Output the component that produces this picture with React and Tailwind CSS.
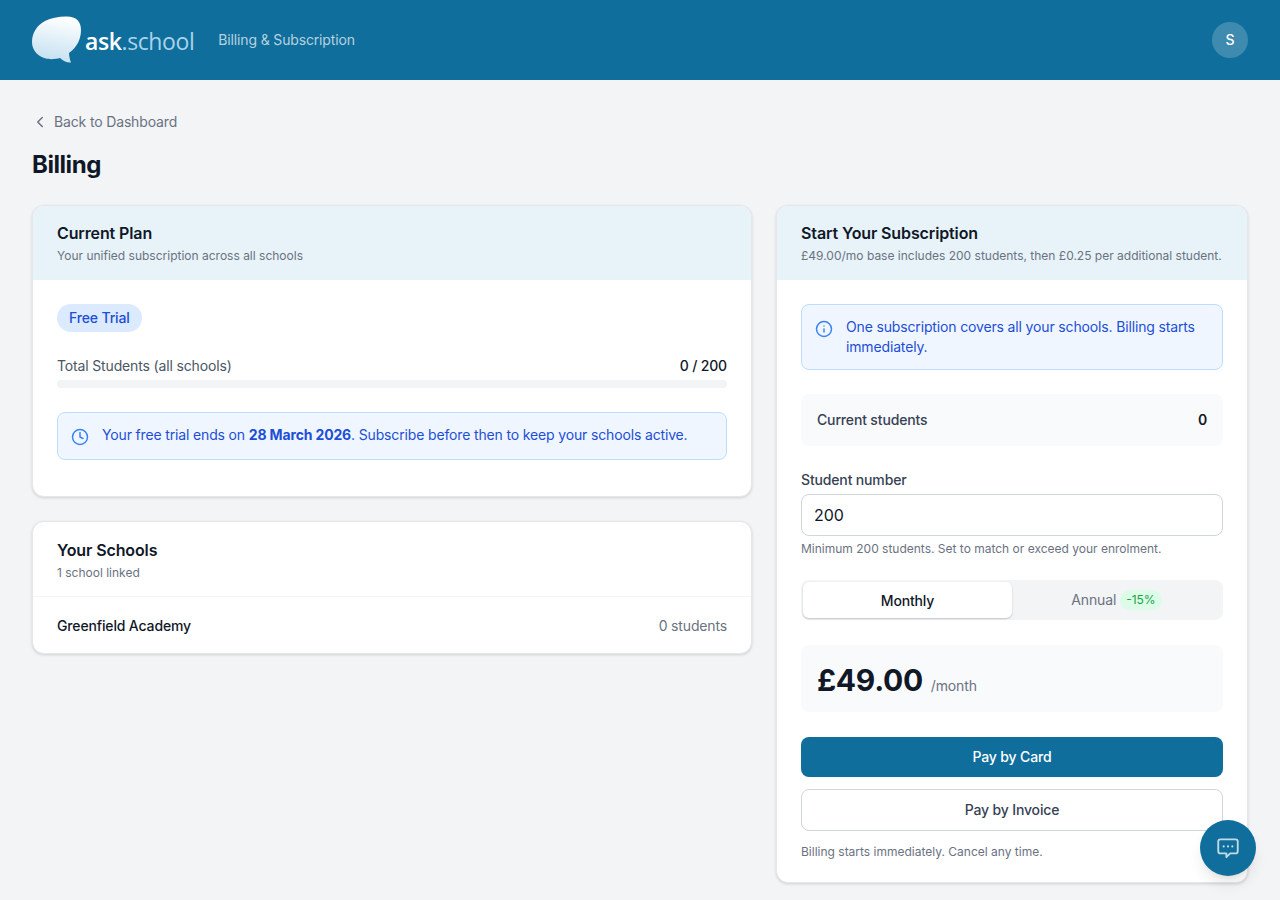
import React from 'react'
import { ChevronLeft, Clock, Info } from 'lucide-react'

function Logo() {
    return (
        <div className="flex items-center">
            <svg width="50" height="48" viewBox="0 0 50 48" className="shrink-0">
                <defs>
                    <linearGradient id="bubble" x1="0.6" y1="0" x2="0.4" y2="1">
                        <stop offset="0" stopColor="#ffffff" />
                        <stop offset="1" stopColor="#c4e0f0" />
                    </linearGradient>
                </defs>
                <path
                    d="M34 0.5C44 0.2 49 5 49 14C49 23 45 31 37 37C37 40 38 44 39 46.5C35 47 31 45 28 42C24 43 18 44 12 42C4 39 0 33 0 26C0 17 5 9 13 5C19 2 26 0.7 34 0.5Z"
                    fill="url(#bubble)"
                />
            </svg>
            <span className="font-['Open_Sans',sans-serif] text-[23px] leading-none tracking-[-0.4px] ml-[3px] mt-[3px] text-[#a9d3ea]">
                <span className="font-semibold text-white">ask</span>.school
            </span>
        </div>
    )
}

function CardHeader({ title, subtitle }) {
    return (
        <div className="bg-[#e7f3f8] px-6 pt-[15px] pb-4">
            <h2 className="text-base leading-6 font-semibold tracking-[-0.12px] text-gray-900">{title}</h2>
            <p className="text-xs leading-4 mt-[3px] text-gray-500">{subtitle}</p>
        </div>
    )
}

function App() {
    return (
        <div className="min-h-screen bg-[#f3f4f6] font-['Inter',sans-serif]">
            <header className="h-20 bg-[#0f6e9c] px-8 flex items-center justify-between">
                <div className="flex items-center gap-[24px]">
                    <Logo />
                    <span className="text-sm tracking-[-0.15px] text-white/70">Billing &amp; Subscription</span>
                </div>
                <div className="w-9 h-9 rounded-full bg-white/20 flex items-center justify-center text-sm font-medium text-white">
                    S
                </div>
            </header>

            <main className="px-8 pt-8 pb-4">
                <a className="flex items-center gap-[5px] text-sm leading-5 tracking-[-0.15px] text-gray-500 w-fit">
                    <ChevronLeft className="w-[18px] h-[18px] -ml-px" strokeWidth={2} />
                    <span>Back to Dashboard</span>
                </a>
                <h1 className="text-2xl leading-8 font-bold tracking-[-0.45px] text-gray-900 mt-[17px]">Billing</h1>

                <div className="grid grid-cols-[720px_472px] gap-6 mt-6 items-start">
                    <div className="flex flex-col gap-6">
                        <section className="bg-white rounded-xl overflow-hidden border border-gray-200 shadow-[0_1px_3px_rgba(0,0,0,0.15)]">
                            <CardHeader title="Current Plan" subtitle="Your unified subscription across all schools" />
                            <div className="px-6 pt-6 pb-9">
                                <span className="block w-fit rounded-full bg-[#dbeafe] text-[#1d4ed8] text-sm leading-5 tracking-[-0.15px] font-medium px-3 py-1">
                                    Free Trial
                                </span>
                                <div className="flex justify-between text-sm leading-5 tracking-[-0.15px] mt-6">
                                    <span className="text-gray-600">Total Students (all schools)</span>
                                    <span className="font-medium text-gray-900">0 / 200</span>
                                </div>
                                <div className="h-2 rounded-full bg-gray-100 mt-1" />
                                <div className="mt-6 h-12 rounded-lg border border-[#bfdbfe] bg-[#eff6ff] px-[13px] flex items-center gap-[13px] text-sm tracking-[-0.15px] text-[#1d4ed8]">
                                    <Clock className="w-[18px] h-[18px] text-[#3b82f6] mt-0.5 shrink-0" strokeWidth={2} />
                                    <p className="mb-0.5">
                                        Your free trial ends on <strong className="font-bold">28 March 2026</strong>. Subscribe before then to keep your schools active.
                                    </p>
                                </div>
                            </div>
                        </section>

                        <section className="bg-white rounded-xl overflow-hidden border border-gray-200 shadow-[0_1px_3px_rgba(0,0,0,0.15)]">
                            <div className="px-6 pt-4 pb-[15px] border-b border-gray-100">
                                <h2 className="text-base leading-6 font-semibold tracking-[-0.12px] text-gray-900">Your Schools</h2>
                                <p className="text-xs leading-4 mt-[3px] text-gray-500">1 school linked</p>
                            </div>
                            <div className="px-6 pt-[19px] pb-[17px] flex items-center justify-between text-sm leading-5 tracking-[-0.15px]">
                                <span className="font-medium text-gray-900">Greenfield Academy</span>
                                <span className="text-gray-500">0 students</span>
                            </div>
                        </section>
                    </div>

                    <section className="bg-white rounded-xl overflow-hidden border border-gray-200 shadow-[0_1px_3px_rgba(0,0,0,0.15)]">
                        <CardHeader
                            title="Start Your Subscription"
                            subtitle="£49.00/mo base includes 200 students, then £0.25 per additional student."
                        />
                        <div className="px-6 pt-6 pb-[22px]">
                            <div className="rounded-lg border border-[#bfdbfe] bg-[#eff6ff] px-[13px] py-[12px] flex gap-[13px] text-sm leading-5 tracking-[-0.15px] text-[#1d4ed8]">
                                <Info className="w-[18px] h-[18px] text-[#3b82f6] mt-[3px] shrink-0" strokeWidth={2} />
                                <p>One subscription covers all your schools. Billing starts immediately.</p>
                            </div>

                            <div className="mt-6 h-[52px] rounded-lg bg-[#f9fafb] px-4 flex items-center justify-between text-sm tracking-[-0.15px]">
                                <span className="font-medium text-gray-700">Current students</span>
                                <span className="font-semibold text-gray-900">0</span>
                            </div>

                            <label className="block mt-6 text-sm leading-5 tracking-[-0.15px] font-medium text-gray-700">Student number</label>
                            <input
                                defaultValue="200"
                                className="block w-full h-[42px] mt-1 rounded-lg border border-gray-300 bg-white px-3 text-base text-gray-900 outline-none"
                            />
                            <p className="text-xs leading-4 mt-[5px] text-gray-500">
                                Minimum 200 students. Set to match or exceed your enrolment.
                            </p>

                            <div className="mt-[23px] h-10 rounded-lg bg-[#f3f4f6] p-0.5 grid grid-cols-2 text-sm tracking-[-0.15px]">
                                <button className="rounded-md bg-white pt-px font-medium text-gray-900 shadow-[0_1px_2px_rgba(0,0,0,0.2)]">Monthly</button>
                                <button className="flex items-center justify-center gap-1 text-gray-500">
                                    Annual
                                    <span className="rounded-full bg-[#dcfce7] text-[#16a34a] text-xs leading-4 tracking-normal px-[6px] py-0.5">-15%</span>
                                </button>
                            </div>

                            <div className="mt-[25px] h-[67px] rounded-lg bg-[#f9fafb] px-4 flex items-baseline pt-[17px] gap-2">
                                <span className="text-3xl leading-9 font-bold tracking-[-0.3px] text-gray-900">£49.00</span>
                                <span className="text-sm tracking-[-0.15px] text-gray-500">/month</span>
                            </div>

                            <button className="mt-[25px] block w-full h-[39.5px] rounded-lg bg-[#0f6e9c] text-sm tracking-[-0.15px] font-medium text-white">Pay by Card</button>
                            <button className="mt-3 block w-full h-[42px] rounded-lg border border-gray-300 bg-white text-sm tracking-[-0.15px] font-medium text-gray-700">Pay by Invoice</button>
                            <p className="text-xs leading-4 mt-[13px] text-gray-500">Billing starts immediately. Cancel any time.</p>
                        </div>
                    </section>
                </div>
            </main>

            <button className="fixed right-6 bottom-6 w-14 h-14 rounded-full bg-[#0f6e9c] shadow-lg flex items-center justify-center">
                <svg width="26" height="26" viewBox="0 0 24 24" fill="none" stroke="rgba(255,255,255,0.75)" strokeWidth="1.7" strokeLinejoin="round">
                    <path d="M5 4h14a2 2 0 0 1 2 2v9a2 2 0 0 1-2 2h-5l-3.5 3.5V17H5a2 2 0 0 1-2-2V6a2 2 0 0 1 2-2z" />
                    <path d="M8 10.5h.01M12 10.5h.01M16 10.5h.01" strokeLinecap="round" strokeWidth="2" />
                </svg>
            </button>
        </div>
    )
}

export default App
